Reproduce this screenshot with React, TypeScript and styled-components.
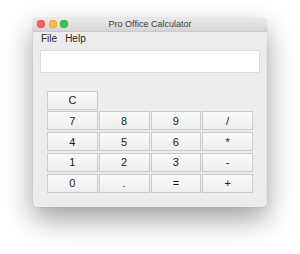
import React from "react";
import styled, { createGlobalStyle } from "styled-components";

const Global = createGlobalStyle`
  html, body { margin: 0; padding: 0; background: #ffffff; }
  body { font-family: "Liberation Sans", Arial, sans-serif; }
`;

const Page = styled.div`
  width: 300px;
  height: 254px;
  padding: 18px 0 0 33px;
  box-sizing: border-box;
  background: #fff;
`;

const Window = styled.div`
  width: 234px;
  height: 189px;
  background: #ececec;
  border-radius: 4px;
  display: flex;
  flex-direction: column;
  overflow: hidden;
  box-shadow: 0 12px 28px rgba(0, 0, 0, 0.38), 0 0 1px rgba(0, 0, 0, 0.35);
`;

const TitleBar = styled.div`
  height: 13.5px;
  flex: none;
  position: relative;
  display: flex;
  align-items: center;
  padding-left: 4px;
  gap: 3.5px;
  background: linear-gradient(#ebe9eb, #d6d4d6);
  border-bottom: 1px solid #c9c7c9;
  box-sizing: border-box;
`;

const Light = styled.span<{ $c: string; $b: string }>`
  width: 8px;
  height: 8px;
  border-radius: 50%;
  background: ${(p) => p.$c};
  box-shadow: inset 0 0 0 0.5px ${(p) => p.$b};
`;

const Title = styled.div`
  position: absolute;
  left: 0;
  right: 0;
  top: 0;
  bottom: 0;
  display: flex;
  align-items: center;
  justify-content: center;
  font-size: 9px;
  color: #3e3e3e;
`;

const MenuBar = styled.div`
  height: 13px;
  flex: none;
  display: flex;
  align-items: center;
  gap: 8px;
  padding: 1px 0 0 8px;
  box-sizing: border-box;
  font-size: 10px;
  color: #2a2a2a;
`;

const Display = styled.div`
  margin: 5px 0 0 7px;
  width: 220px;
  height: 23px;
  box-sizing: border-box;
  background: #ffffff;
  border: 1px solid #dcdcdc;
`;

const Keypad = styled.div`
  margin: 18px 0 0 14px;
  width: 206px;
  display: grid;
  grid-template-columns: repeat(4, 1fr);
  grid-auto-rows: 19px;
  column-gap: 1px;
  row-gap: 1.75px;
`;

const Key = styled.button`
  margin: 0;
  padding: 0;
  box-sizing: border-box;
  border: 1px solid #cbcbcb;
  background: linear-gradient(#fafafa, #eeeeee);
  font-family: "Liberation Sans", Arial, sans-serif;
  font-size: 11px;
  color: #1a1a1a;
  display: flex;
  align-items: center;
  justify-content: center;
`;

const rows = [
  ["7", "8", "9", "/"],
  ["4", "5", "6", "*"],
  ["1", "2", "3", "-"],
  ["0", ".", "=", "+"],
];

export default function App() {
  return (
    <>
      <Global />
      <Page>
        <Window>
          <TitleBar>
            <Light $c="#fc605c" $b="#de4b46" />
            <Light $c="#fdbc40" $b="#dea123" />
            <Light $c="#34c84a" $b="#27aa35" />
            <Title>Pro Office Calculator</Title>
          </TitleBar>
          <MenuBar>
            <span>File</span>
            <span>Help</span>
          </MenuBar>
          <Display />
          <Keypad>
            <Key>C</Key>
            <span />
            <span />
            <span />
            {rows.flat().map((k) => (
              <Key key={k}>{k}</Key>
            ))}
          </Keypad>
        </Window>
      </Page>
    </>
  );
}
